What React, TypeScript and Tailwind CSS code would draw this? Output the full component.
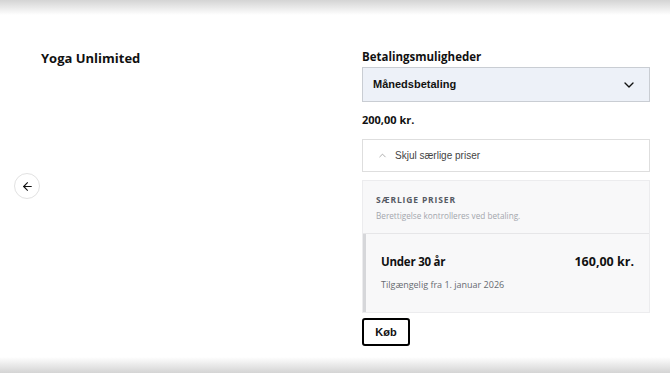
import { ArrowLeft, ChevronDown, ChevronUp } from 'lucide-react'

const openSans = "font-['Open_Sans',sans-serif]"
const arial = "font-['Liberation_Sans',Arial,sans-serif]"

export default function App() {
  return (
    <div className={`flex h-[373px] w-[670px] flex-col overflow-hidden bg-white text-[#111] ${openSans}`}>
      <div className="h-[15px] shrink-0 bg-gradient-to-b from-[#d4d4d4] to-white" />

      <div className="flex flex-1">
        {/* left */}
        <div className="flex w-[362px] shrink-0 flex-col pl-[14px] pt-[33px]">
          <h1 className="ml-[27px] text-[13px] font-bold leading-[20px]">Yoga Unlimited</h1>
          <button className="mt-[105px] flex h-[26px] w-[26px] items-center justify-center rounded-full border border-[#e2e2e2] bg-white">
            <ArrowLeft className="h-[13px] w-[13px]" strokeWidth={2} />
          </button>
        </div>

        {/* right */}
        <div className="flex w-[288px] shrink-0 flex-col pt-[34px]">
          <div className="text-[11.5px] font-bold leading-[16px]">Betalingsmuligheder</div>

          <div className="mt-[2px] flex h-[35px] items-center justify-between border border-[#c9cdd3] bg-[#edf1f8] pl-[10px] pr-[12px]">
            <span className={`${arial} text-[11px] font-bold`}>Månedsbetaling</span>
            <ChevronDown className="h-[16px] w-[16px]" strokeWidth={2} />
          </div>

          <div className="mt-[10px] text-[11px] font-bold leading-[16px]">200,00 kr.</div>

          <button className={`${arial} mt-[11px] flex h-[33px] items-center gap-[7px] border border-[#dedede] bg-white pl-[14px] text-[10px] text-[#444]`}>
            <ChevronUp className="h-[11px] w-[11px] text-[#8a8a8a]" strokeWidth={1.5} />
            Skjul særlige priser
          </button>

          <div className="mt-[8px] flex w-[288px] flex-col overflow-hidden border border-[#ececee] bg-[#f8f8f9]">
            <div className="flex h-[53px] flex-col justify-center gap-[4px] border-b border-[#e6e6e8] px-[13px] pt-[2px]">
              <div className="text-[8.5px] font-bold uppercase leading-[12px] tracking-[0.1em] text-[#555a63]">Særlige priser</div>
              <div className="text-[8.2px] leading-[12px] text-[#a3a6ad]">Berettigelse kontrolleres ved betaling.</div>
            </div>
            <div className="flex h-[78px] flex-col border-l-[3px] border-[#d6d7da] pl-[15px] pr-[15px] pt-[20px]">
              <div className="flex items-center justify-between">
                <span className="text-[11.5px] font-bold leading-[16px] tracking-[-0.02em]">Under 30 år</span>
                <span className="text-[12.5px] font-bold leading-[16px]">160,00 kr.</span>
              </div>
              <div className="mt-[8px] text-[9px] leading-[14px] text-[#666a70]">Tilgængelig fra 1. januar 2026</div>
            </div>
          </div>

          <button className={`${arial} mt-[5px] flex h-[28px] w-[48px] items-center justify-center rounded-[3px] border-2 border-black text-[11px] font-bold`}>
            Køb
          </button>
        </div>
      </div>

      <div className="h-[16px] shrink-0 bg-gradient-to-t from-[#d4d4d4] to-white" />
    </div>
  )
}
